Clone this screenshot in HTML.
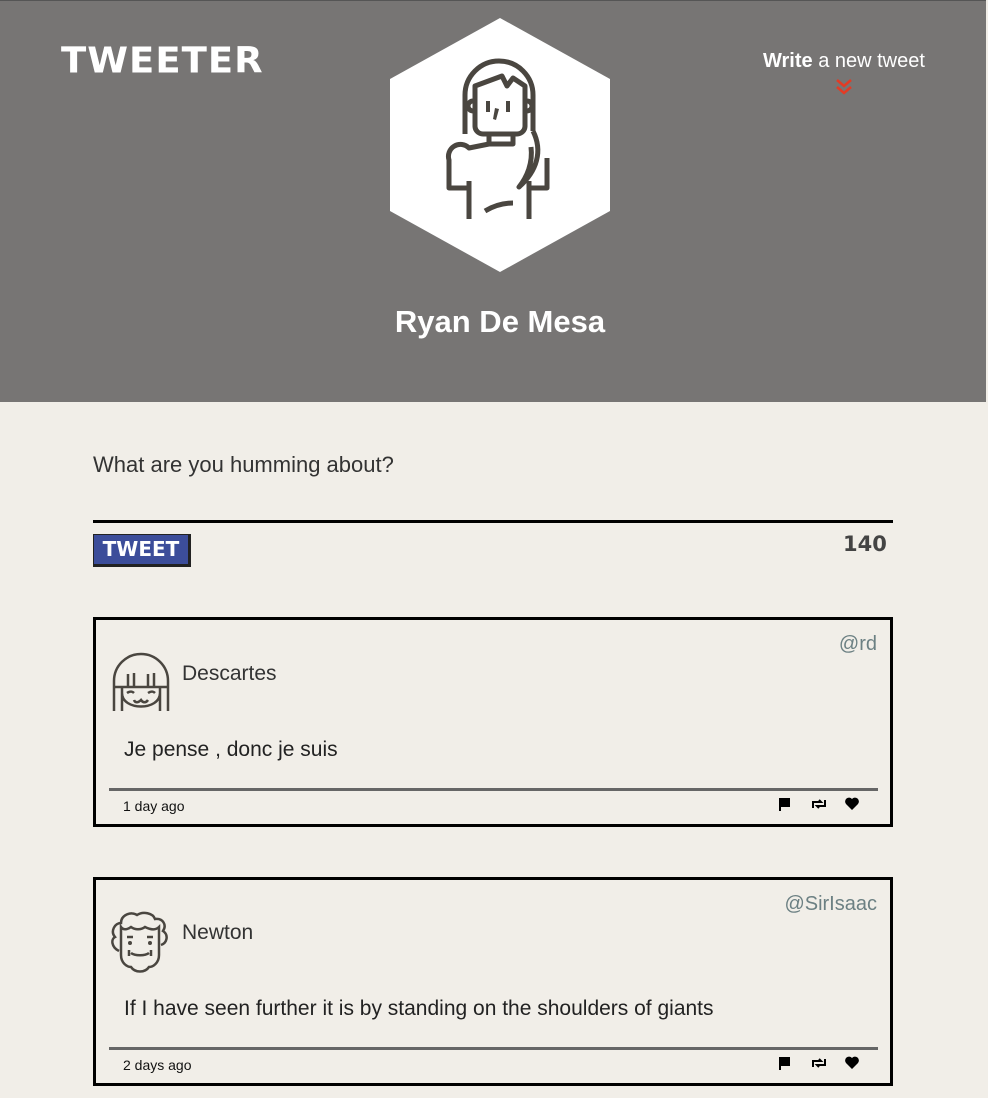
<!DOCTYPE html>
<html><head><meta charset="utf-8"><style>
body{margin:0;width:988px;height:1098px;background:#f1eee8;font-family:"Liberation Sans",sans-serif;position:relative;overflow:hidden}
.hdr{position:absolute;left:0;top:0;width:986px;height:401px;background:#777574;border-top:1px solid #555}
.logo{position:absolute;left:61px;top:38px;color:#fff;font-weight:900;font-size:37px;letter-spacing:1px;font-family:"DejaVu Sans",sans-serif;transform:scaleY(0.95)}
.write{position:absolute;left:763px;top:49px;color:#fff;font-size:20px}
.name{position:absolute;left:0;width:1000px;text-align:center;top:303px;color:#fff;font-size:31px;font-weight:bold}
.ta{position:absolute;left:93px;top:452px;font-size:22px;color:#333;font-weight:300}
.line{position:absolute;left:93px;top:520px;width:800px;height:3px;background:#000}
.btn{position:absolute;left:93px;top:534px;width:98px;height:33px;background:#3c4d9a;border:1px solid #222;border-right:3px solid #222;border-bottom:3px solid #222;box-sizing:border-box;color:#fff;font:900 20px "DejaVu Sans",sans-serif;text-align:center;line-height:28px}
.cnt{position:absolute;left:843px;top:532px;font:900 21px "DejaVu Sans",sans-serif;color:#444}
.tw{position:absolute;left:93px;width:800px;border:3px solid #000;box-sizing:border-box}
.tw .h{position:absolute;right:13px;top:13px;color:#6c8083;font-size:20px}
.tw .n{position:absolute;left:86px;font-size:21px;color:#333}
.tw .t{position:absolute;left:28px;font-size:21px;color:#222}
.tw .f{position:absolute;left:13px;right:12px;height:3px;background:#666}
.tw .d{position:absolute;left:27px;font-size:14px;color:#111}
.tw .ic{position:absolute;right:27px}
</style></head><body>
<div class="hdr">
<div class="logo">TWEETER</div>
<div class="write"><b>Write</b> a new tweet</div>
<svg style="position:absolute;left:835px;top:77px" width="18" height="18" viewBox="0 0 18 18"><path d="M2 2l7 6 7-6M2 9l7 6 7-6" fill="none" stroke="#e33b25" stroke-width="2.5"/></svg>
<svg style="position:absolute;left:389px;top:16px" width="222" height="256" viewBox="0 0 222 256">
<polygon points="111,1 221,62 221,194 111,255 1,194 1,62" fill="#fff"/>
<g fill="none" stroke="#4a4640" stroke-width="5" stroke-linejoin="round" stroke-linecap="butt">
<path d="M76 117V78a34 34 0 0 1 68 0v36"/>
<path d="M86 69v40a8 8 0 0 0 8 8h34a8 8 0 0 0 8-8V69l-12-8-6 8-5-10z"/>
<path d="M84 84a4 4 0 0 0 0 10M138 84a4 4 0 0 1 0 10"/>
<path d="M100 117v10h24v-10"/>
<path d="M100 127l-20 4a12 12 0 0 0-20 12v28h19M80 164v38M140 164v38M158 141v30h-18"/>
<path d="M144 114c10 20 4 40-14 56 8-10 14-24 12-40"/>
<path d="M96 194c10-6 20-8 28-8"/>
</g>
<g fill="#4a4640"><rect x="97" y="84" width="4" height="11"/><rect x="117" y="84" width="4" height="11"/><path d="M106 91l4 1-3 11-3-1z"/></g>
</svg>
<div class="name">Ryan De Mesa</div>
</div>
<div class="ta">What are you humming about?</div>
<div class="line"></div>
<div class="btn">TWEET</div>
<div class="cnt">140</div>

<div class="tw" style="top:617px;height:210px">
<div class="h">@rd</div>
<svg style="position:absolute;left:16px;top:27px" width="58" height="68" viewBox="0 0 58 68"><g fill="none" stroke="#4a4640" stroke-width="2.5"><path d="M2 64V34a27 27 0 0 1 54 0v30"/><path d="M2 40h54M10 64V40M48 64V40M10 46c0 18 38 18 38 0"/><path d="M16 40V27M22 40V26M36 40V27M42 40V26"/><path d="M15 46c3-2 5-2 7 0M36 46c3-2 5-2 7 0M22 53c1 3 4 3 7 0 2 3 5 3 7 0"/></g></svg>
<div class="n" style="top:42px">Descartes</div>
<div class="t" style="top:118px">Je pense , donc je suis</div>
<div class="f" style="top:168px"></div>
<div class="d" style="top:178px">1 day ago</div>
<svg class="ic" style="top:176px" width="86" height="16" viewBox="0 0 86 16"><path d="M3 2v13M3 3h9v7H3" stroke="#000" stroke-width="2" fill="#000"/><path d="M36 12V6h8l-2-2M48 4v6h-8l2 2" fill="none" stroke="#000" stroke-width="2"/><path d="M75 14l-6-6a3.5 3.5 0 0 1 6-5 3.5 3.5 0 0 1 6 5z" fill="#000"/></svg>
</div>

<div class="tw" style="top:877px;height:209px">
<div class="h">@SirIsaac</div>
<svg style="position:absolute;left:13px;top:25px" width="62" height="68" viewBox="0 0 62 68"><g fill="none" stroke="#4a4640" stroke-width="2.5"><path d="M10 46c-8-4-8-12-4-14-5-6 0-14 6-14 0-8 10-12 16-8 6-4 16-2 18 4 8-1 12 6 8 12 6 4 4 12-2 14"/><path d="M12 22v28c0 8 6 12 10 12 4 6 14 6 18 0 4 0 10-4 10-12V22c-4 4-10 2-14 0-4 3-10 3-14 0-4 3-8 3-10 0z"/><path d="M22 48c4 3 14 3 18 0M20 45v6M42 45v6"/><path d="M18 32h6M38 32h6"/></g><circle cx="21" cy="38" r="2" fill="#4a4640"/><circle cx="41" cy="38" r="2" fill="#4a4640"/></svg>
<div class="n" style="top:41px">Newton</div>
<div class="t" style="top:117px">If I have seen further it is by standing on the shoulders of giants</div>
<div class="f" style="top:167px"></div>
<div class="d" style="top:177px">2 days ago</div>
<svg class="ic" style="top:175px" width="86" height="16" viewBox="0 0 86 16"><path d="M3 2v13M3 3h9v7H3" stroke="#000" stroke-width="2" fill="#000"/><path d="M36 12V6h8l-2-2M48 4v6h-8l2 2" fill="none" stroke="#000" stroke-width="2"/><path d="M75 14l-6-6a3.5 3.5 0 0 1 6-5 3.5 3.5 0 0 1 6 5z" fill="#000"/></svg>
</div>
</body></html>
